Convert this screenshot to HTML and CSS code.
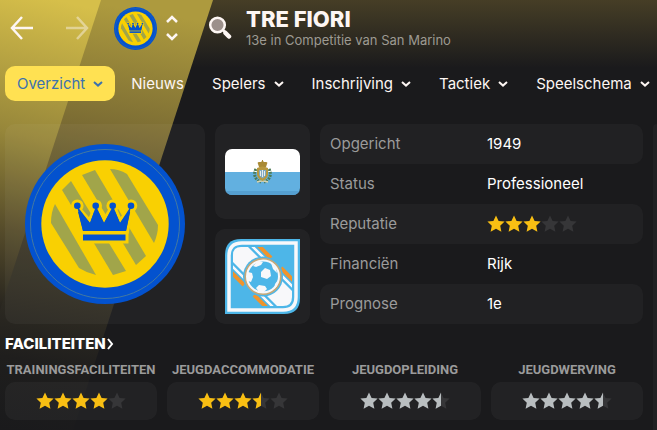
FILE: index.html
```html
<!DOCTYPE html>
<html lang="nl">
<head>
  <meta charset="UTF-8">
  <meta name="viewport" content="width=device-width, initial-scale=1">
  <title>Tre Fiori - Overzicht</title>
  <link rel="stylesheet" href="styles.css">
</head>
<body>

  <!-- shared shapes -->
  <svg class="sprite" aria-hidden="true">
    <symbol id="star" viewBox="0 0 18 18">
      <path d="M9 .5l2.600 5.400 6 .7-4.400 4.100 1.200 6L9 13.800l-5.400 2.900 1.200-6L.4 6.600l6-.7z"/>
    </symbol>
    <symbol id="half" viewBox="0 0 18 18">
      <path d="M9 .5v13.300l-5.400 2.900 1.200-6L.4 6.600l6-.7z"/>
    </symbol>
    <symbol id="chevron" viewBox="0 0 10 6">
      <path d="M1 1l4 3.600L9 1" fill="none" stroke="currentColor" stroke-width="2"/>
    </symbol>
    <symbol id="crest" viewBox="0 0 160 160">
      <circle cx="80" cy="80" r="80" fill="#0352cf"/>
      <circle cx="80" cy="80" r="74.500" fill="none" stroke="#4479a0" stroke-width="1"/>
      <circle cx="80" cy="80" r="63.700" fill="#f9d002"/>
      <g fill="#a1a54a">
        <path d="M30 60L71 131Q62 129 54 124L26 79Q26 68 30 60z"/>
        <path d="M37 46L46 37L101 127L88 131z"/>
        <path d="M57 31L70 26L121 112L111 121z"/>
        <path d="M85 25Q94 25 102 30L133 81Q133 90 129 99z"/>
      </g>
      <g fill="#0352cf" stroke="#f9d002" stroke-width="6" paint-order="stroke">
        <path d="M52 64L58 87H101L106 64L95 79L88 63L79 79L71 63L65 79z"/>
        <rect x="58" y="90.500" width="42.500" height="6"/>
        <circle cx="52.300" cy="61.700" r="3.300"/>
        <circle cx="70.700" cy="61.700" r="3.300"/>
        <circle cx="87.700" cy="61.700" r="3.300"/>
        <circle cx="106" cy="61.700" r="3.300"/>
      </g>
      <path fill="#0352cf" d="M52 62L58 87H101L106 62L95 79L88 62L79 79L71 62L65 79z"/>
    </symbol>
  </svg>

  <header class="topbar">
    <div class="history">
      <button class="icon-btn" aria-label="Terug">
        <svg width="24" height="24" viewBox="0 0 24 24"><path d="M23 12H3M12 1L2 12l10 11"/></svg>
      </button>
      <button class="icon-btn forward" aria-label="Vooruit">
        <svg width="24" height="24" viewBox="0 0 24 24"><path d="M1 12h20M12 1l10 11-10 11"/></svg>
      </button>
    </div>
    <div class="club-switch">
      <svg width="43" height="43" role="img" aria-label="Tre Fiori"><use href="#crest"/></svg>
      <div class="stepper">
        <button class="icon-btn" aria-label="Vorige club">
          <svg width="14" height="8" viewBox="0 0 14 8"><path d="M2 7l5-5 5 5"/></svg>
        </button>
        <button class="icon-btn" aria-label="Volgende club">
          <svg width="14" height="8" viewBox="0 0 14 8"><path d="M2 1l5 5 5-5"/></svg>
        </button>
      </div>
    </div>
    <div class="club-title">
      <button class="icon-btn" aria-label="Zoeken">
        <svg width="24" height="24" viewBox="0 0 24 24">
          <circle cx="9.500" cy="9" r="7.300" fill="#9c908b"/>
          <path d="M15 14l2 2"/>
          <path d="M17.500 17l3.500 3.500" stroke-width="4.500" stroke-linecap="round"/>
        </svg>
      </button>
      <div>
        <h1>TRE FIORI</h1>
        <p>13e in Competitie van San Marino</p>
      </div>
    </div>
  </header>

  <nav class="tabs">
    <a class="tab active" href="#">Overzicht <svg class="chevron"><use href="#chevron"/></svg></a>
    <a class="tab" href="#">Nieuws</a>
    <a class="tab" href="#">Spelers <svg class="chevron"><use href="#chevron"/></svg></a>
    <a class="tab" href="#">Inschrijving <svg class="chevron"><use href="#chevron"/></svg></a>
    <a class="tab" href="#">Tactiek <svg class="chevron"><use href="#chevron"/></svg></a>
    <a class="tab" href="#">Speelschema <svg class="chevron"><use href="#chevron"/></svg></a>
  </nav>

  <div class="page">
    <main>
      <section class="overview">
        <div class="card">
          <svg width="160" height="160" role="img" aria-label="Clublogo Tre Fiori"><use href="#crest"/></svg>
        </div>

        <div class="badges">
          <div class="card">
            <svg class="flag" width="75" height="46" viewBox="0 0 75 46" role="img" aria-label="San Marino">
              <path fill="#fff" d="M0 0h75v23H0z"/>
              <path fill="#62b0e0" d="M0 23h75v23H0z"/>
              <path fill="#559fd0" d="M0 42h75v4H0z"/>
              <path d="M31 20c-3 5-1 11 5 13M44 20c3 5 1 11-5 13" fill="none" stroke="#4c7a55" stroke-width="3" stroke-dasharray="2 1"/>
              <path d="M32 33q5.500-2 11 0" fill="none" stroke="#d9d4b0" stroke-width="1.500"/>
              <path fill="#a98a35" d="M33 15q-1-2 1-2h2l1-1h1l1 1h2q2 0 1 2l-1 3h-7zM37 11h1v2h-1z"/>
              <path fill="#b7983f" d="M32 19q5.500-3 11 0v7q-1 4-5.500 6Q33 30 32 26z"/>
              <path fill="#7fa9c4" d="M34 21h7v5q-1 2-3.500 3.500Q35 28 34 26z"/>
              <path d="M35.500 22v5M37.500 21v7M39.500 22v5" stroke="#e8ecec" stroke-width="1"/>
            </svg>
          </div>
          <div class="card">
            <svg width="75" height="75" viewBox="0 0 75 75" role="img" aria-label="Competitie van San Marino">
              <clipPath id="inner"><path d="M16 8H67V58Q67 67 58 67H8V16Q8 8 16 8z"/></clipPath>
              <path fill="#4db6e8" d="M16 0H75V59Q75 75 59 75H0V16Q0 0 16 0z"/>
              <path fill="none" stroke="#f8f8fa" stroke-width="3.500" d="M17 4H71V58Q71 71 58 71H4V17Q4 4 17 4z"/>
              <g clip-path="url(#inner)">
                <path fill="#f8f8fa" d="M0 0L15 0L75 60V75H60L0 15z"/>
                <path stroke="#f8f8fa" stroke-width="2.500" d="M20 0L75 55M0 20L55 75"/>
                <path stroke="#ef942c" stroke-width="4" d="M27 0L46 19M56 29L75 48M0 27L19 46M29 56L48 75"/>
              </g>
              <circle cx="38" cy="37.500" r="20" fill="#4db6e8"/>
              <circle cx="38" cy="37.500" r="17.800" fill="#f8f8fa" stroke="#c5a878" stroke-width="1.600"/>
              <circle cx="38" cy="37.500" r="15" fill="#4db6e8"/>
              <g fill="#f8f8fa">
                <path d="M36 33l4-4 5 2 1 6-4 3-6-2z"/>
                <path d="M23 33l4 1 1 4-2 5-3-1z"/>
                <path d="M31 49l3-3 6 1 2 3-3 3h-5z"/>
                <path d="M28 27l4-4 6 0-2 3-5 2z"/>
                <path d="M50 45l3-4-1 6-3 3z"/>
                <path d="M46 24l5 5 1 5-4-4z"/>
              </g>
            </svg>
          </div>
        </div>

        <dl class="facts">
          <div><dt>Opgericht</dt><dd>1949</dd></div>
          <div><dt>Status</dt><dd>Professioneel</dd></div>
          <div>
            <dt>Reputatie</dt>
            <dd>
              <span class="stars gold" role="img" aria-label="3 van 5 sterren">
                <svg><use href="#star"/></svg><svg><use href="#star"/></svg><svg><use href="#star"/></svg><svg class="off"><use href="#star"/></svg><svg class="off"><use href="#star"/></svg>
              </span>
            </dd>
          </div>
          <div><dt>Financiën</dt><dd>Rijk</dd></div>
          <div><dt>Prognose</dt><dd>1e</dd></div>
        </dl>
      </section>

      <section>
        <h2><a href="#">FACILITEITEN<svg width="8" height="12" viewBox="0 0 8 12"><path d="M2 1l4 5-4 5"/></svg></a></h2>
        <div class="facilities">
          <div>
            <h3>TRAININGSFACILITEITEN</h3>
            <div class="card">
              <span class="stars gold" role="img" aria-label="4 van 5 sterren">
                <svg><use href="#star"/></svg><svg><use href="#star"/></svg><svg><use href="#star"/></svg><svg><use href="#star"/></svg><svg class="off"><use href="#star"/></svg>
              </span>
            </div>
          </div>
          <div>
            <h3>JEUGDACCOMMODATIE</h3>
            <div class="card">
              <span class="stars gold" role="img" aria-label="3,5 van 5 sterren">
                <svg><use href="#star"/></svg><svg><use href="#star"/></svg><svg><use href="#star"/></svg><svg><use class="off" href="#star"/><use href="#half"/></svg><svg class="off"><use href="#star"/></svg>
              </span>
            </div>
          </div>
          <div>
            <h3>JEUGDOPLEIDING</h3>
            <div class="card">
              <span class="stars silver" role="img" aria-label="4,5 van 5 sterren">
                <svg><use href="#star"/></svg><svg><use href="#star"/></svg><svg><use href="#star"/></svg><svg><use href="#star"/></svg><svg><use class="off" href="#star"/><use href="#half"/></svg>
              </span>
            </div>
          </div>
          <div>
            <h3>JEUGDWERVING</h3>
            <div class="card">
              <span class="stars silver" role="img" aria-label="4,5 van 5 sterren">
                <svg><use href="#star"/></svg><svg><use href="#star"/></svg><svg><use href="#star"/></svg><svg><use href="#star"/></svg><svg><use class="off" href="#star"/><use href="#half"/></svg>
              </span>
            </div>
          </div>
        </div>
      </section>
    </main>
    <aside class="side"></aside>
  </div>

</body>
</html>
```
FILE: styles.css
```css
* {
  box-sizing: border-box;
}
body {
  margin: 0;
  min-height: 100vh;
  display: flex;
  flex-direction: column;
  position: relative;
  overflow-x: hidden;
  font-family: Inter, "Liberation Sans", sans-serif;
  font-size: 15px;
  line-height: 20px;
  color: #fdf6f3;
  background: linear-gradient(#463e26, #1a1a1c 68px) #1a1a1c;
}
/* diagonal team colour bands */
body::before,
body::after {
  content: "";
  position: absolute;
  top: 0;
  left: 0;
  width: 213px;
  height: 430px;
  z-index: -1;
}
body::before {
  background: linear-gradient(190deg, #ad9a3e 5%, #7a6b33 32%, #3c3727 60%, #1f1e1d 84%, #1a1a1c);
  clip-path: polygon(0 0, 213px 0, 73px 430px, 0 430px);
}
body::after {
  background: linear-gradient(194deg, #d6bf4a 8%, #96863a 38%, #574d2b 58%, #24221e 76%);
  clip-path: polygon(0 0, 101px 0, 0 310px);
}
h1, h2, h3, p, dl, dd {
  margin: 0;
}
a {
  color: inherit;
  text-decoration: none;
}
svg {
  display: block;
  flex: none;
}
.sprite {
  position: absolute;
  width: 0;
  height: 0;
}

.topbar {
  display: flex;
  align-items: center;
  height: 56px;
  padding-left: 10px;
  gap: 25px;
}
.history {
  display: flex;
  gap: 31px;
}
.club-switch {
  display: flex;
  align-items: center;
  gap: 8px;
}
.stepper {
  display: flex;
  flex-direction: column;
  gap: 10px;
}
.club-title {
  display: flex;
  align-items: center;
  gap: 14px;
  padding-left: 4px;
}
.icon-btn {
  padding: 0;
  border: 0;
  background: none;
  color: inherit;
  cursor: pointer;
}
.icon-btn svg {
  fill: none;
  stroke: currentColor;
  stroke-width: 2.5;
}
.forward {
  opacity: 0.45;
}
h1 {
  font-size: 22px;
  line-height: 24px;
  font-weight: 800;
}
.club-title p {
  font-size: 13px;
  line-height: 18px;
  color: #9d9a92;
}

.tabs {
  display: flex;
  gap: 4px;
  padding: 10px 0 0 5px;
}
.tab {
  display: flex;
  align-items: center;
  gap: 8px;
  height: 35px;
  padding: 0 12px;
  border-radius: 10px;
  white-space: nowrap;
}
.tab.active {
  background: #ffe152;
  color: #3c72ae;
}
.chevron {
  width: 10px;
  height: 6px;
}

.page {
  flex: 1;
  display: flex;
  gap: 10px;
  padding: 23px 0 0 5px;
}
main {
  flex: 1;
  min-width: 0;
}
.side {
  width: 4px;
  border-radius: 8px 0 0 0;
  background: #212123;
}
.card {
  display: flex;
  align-items: center;
  justify-content: center;
  border-radius: 10px;
  background: rgba(255, 255, 255, 0.04);
}
.overview {
  display: grid;
  grid-template-columns: 200px 95px 1fr;
  gap: 10px;
}
.badges {
  display: grid;
  grid-template-rows: 1fr 1fr;
  gap: 10px;
}
.flag {
  border-radius: 7px;
}
.facts > div {
  display: flex;
  align-items: center;
  height: 40px;
  padding: 0 10px;
  border-radius: 10px;
}
.facts > div:nth-child(odd) {
  background: #212123;
}
.facts dt {
  width: 157px;
  color: #9b9b9b;
}
.facts dd {
  color: #fff;
}

.stars {
  display: flex;
}
.stars svg {
  width: 18px;
  height: 18px;
}
.gold {
  fill: #f9bf13;
}
.silver {
  fill: #b9bec0;
}
.stars .off {
  fill: #363638;
}

h2 {
  padding-top: 10px;
  font-size: 15px;
  font-weight: 800;
  color: #fff;
}
h2 a {
  display: flex;
  align-items: center;
}
h2 svg {
  fill: none;
  stroke: currentColor;
  stroke-width: 2;
}
.facilities {
  display: grid;
  grid-template-columns: repeat(4, minmax(0, 1fr));
  gap: 10px;
  padding: 6px 0 10px;
}
h3 {
  display: flex;
  justify-content: center;
  padding-bottom: 2px;
  font-family: Roboto, "Liberation Sans", sans-serif;
  font-size: 13px;
  font-weight: 700;
  white-space: nowrap;
  color: #9b9b9b;
}
.facilities .card {
  height: 38px;
}
```
